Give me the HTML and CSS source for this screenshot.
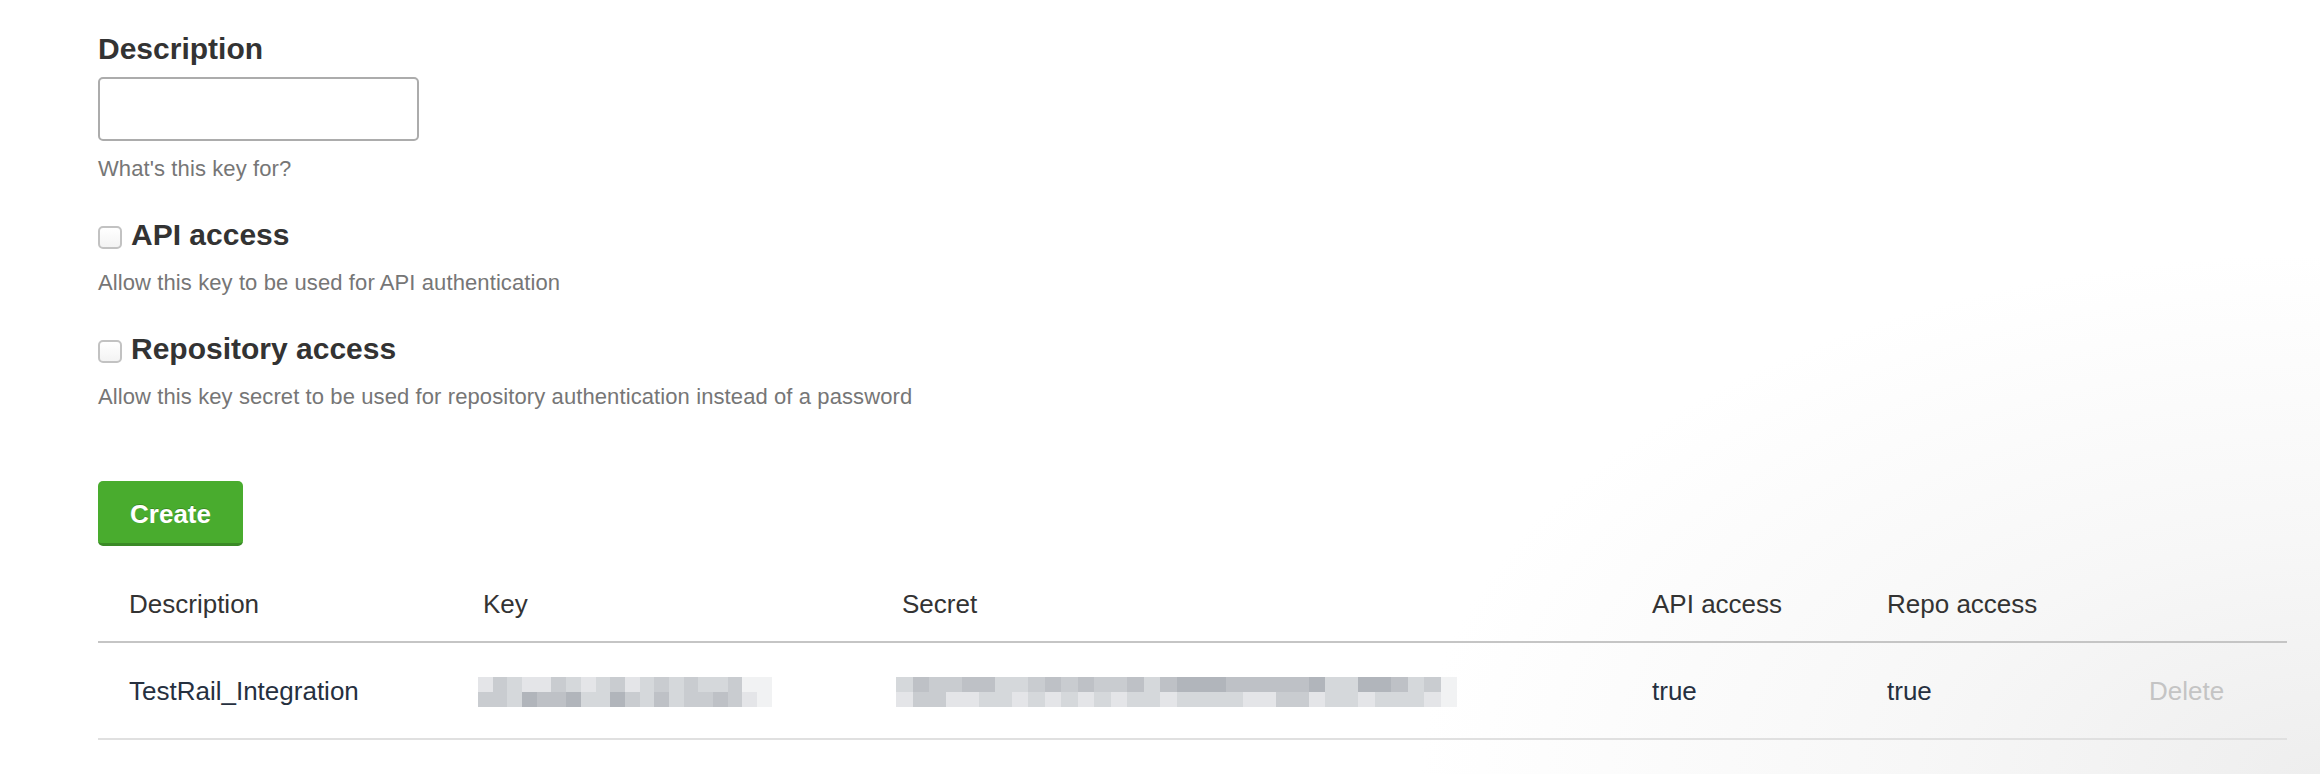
FILE: index.html
```html
<!DOCTYPE html>
<html lang="en">
<head>
<meta charset="utf-8">
<title>API keys</title>
<link rel="stylesheet" href="styles.css">
</head>
<body>
<main class="page">
  <form class="key-form">
    <label class="field-label" for="desc">Description</label>
    <input class="text-input" id="desc" type="text">
    <p class="hint">What's this key for?</p>

    <div class="check-row">
      <input class="checkbox" id="api" type="checkbox">
      <label class="check-label" for="api">API access</label>
    </div>
    <p class="hint hint-tight">Allow this key to be used for API authentication</p>

    <div class="check-row">
      <input class="checkbox" id="repo" type="checkbox">
      <label class="check-label" for="repo">Repository access</label>
    </div>
    <p class="hint hint-tight">Allow this key secret to be used for repository authentication instead of a password</p>

    <button class="btn-create" type="button">Create</button>
  </form>

  <table class="keys">
    <colgroup>
      <col class="c-desc"><col class="c-key"><col class="c-secret"><col class="c-api"><col class="c-repo"><col class="c-del">
    </colgroup>
    <thead>
      <tr>
        <th>Description</th>
        <th>Key</th>
        <th>Secret</th>
        <th>API access</th>
        <th>Repo access</th>
        <th></th>
      </tr>
    </thead>
    <tbody>
      <tr>
        <td>TestRail_Integration</td>
        <td>
          <span class="blur blur-key">
            <span class="blur-row">
              <i class="s1"></i><i class="s3"></i><i class="s2"></i><i class="s1"></i><i class="s1"></i><i class="s3"></i><i class="s2"></i><i class="s1"></i><i class="s2"></i><i class="s3"></i><i class="s1"></i><i class="s2"></i><i class="s3"></i><i class="s2"></i><i class="s3"></i><i class="s2"></i><i class="s2"></i><i class="s3"></i><i class="s0"></i><i class="s0"></i>
            </span>
            <span class="blur-row">
              <i class="s3"></i><i class="s3"></i><i class="s2"></i><i class="s5"></i><i class="s4"></i><i class="s4"></i><i class="s5"></i><i class="s2"></i><i class="s2"></i><i class="s5"></i><i class="s3"></i><i class="s2"></i><i class="s4"></i><i class="s2"></i><i class="s3"></i><i class="s3"></i><i class="s4"></i><i class="s3"></i><i class="s1"></i><i class="s0"></i>
            </span>
          </span>
        </td>
        <td>
          <span class="blur blur-secret">
            <span class="blur-row">
              <i class="s2"></i><i class="s4"></i><i class="s3"></i><i class="s3"></i><i class="s4"></i><i class="s4"></i><i class="s2"></i><i class="s2"></i><i class="s3"></i><i class="s4"></i><i class="s3"></i><i class="s4"></i><i class="s3"></i><i class="s3"></i><i class="s4"></i><i class="s2"></i><i class="s4"></i><i class="s5"></i><i class="s5"></i><i class="s5"></i><i class="s4"></i><i class="s4"></i><i class="s4"></i><i class="s4"></i><i class="s4"></i><i class="s5"></i><i class="s2"></i><i class="s2"></i><i class="s5"></i><i class="s5"></i><i class="s4"></i><i class="s2"></i><i class="s3"></i><i class="s0"></i>
            </span>
            <span class="blur-row">
              <i class="s1"></i><i class="s3"></i><i class="s3"></i><i class="s1"></i><i class="s1"></i><i class="s2"></i><i class="s2"></i><i class="s1"></i><i class="s2"></i><i class="s1"></i><i class="s2"></i><i class="s1"></i><i class="s2"></i><i class="s1"></i><i class="s2"></i><i class="s2"></i><i class="s1"></i><i class="s2"></i><i class="s2"></i><i class="s2"></i><i class="s2"></i><i class="s1"></i><i class="s1"></i><i class="s3"></i><i class="s3"></i><i class="s1"></i><i class="s2"></i><i class="s2"></i><i class="s1"></i><i class="s2"></i><i class="s2"></i><i class="s2"></i><i class="s1"></i><i class="s0"></i>
            </span>
          </span>
        </td>
        <td>true</td>
        <td>true</td>
        <td class="delete">Delete</td>
      </tr>
    </tbody>
  </table>
</main>
</body>
</html>
```

FILE: styles.css
```css
html {
  background: #ffffff;
}

body {
  margin: 0;
  min-height: 774px;
  font-family: "Liberation Sans", Arial, Helvetica, sans-serif;
  color: #333333;
  background: radial-gradient(ellipse 900px 520px at 100% 100%, #eeeeee 0%, #f7f7f7 45%, #ffffff 100%);
}

.page {
  padding: 32px 33px 20px 98px;
}

.key-form {
  display: flex;
  flex-direction: column;
  align-items: flex-start;
}

.field-label {
  display: block;
  font-size: 30px;
  font-weight: bold;
  line-height: 34px;
  color: #333333;
}

.text-input {
  display: block;
  box-sizing: border-box;
  width: 321px;
  height: 64px;
  margin-top: 11px;
  border: 2px solid #acacac;
  border-radius: 5px;
  background: #ffffff;
  font-size: 24px;
}

.hint {
  margin: 15px 0 0;
  font-size: 22px;
  line-height: 26px;
  letter-spacing: 0.1px;
  color: #767676;
}

.hint-tight {
  margin-top: 18px;
}

.check-row {
  display: flex;
  align-items: center;
  gap: 9px;
  margin-top: 36px;
  height: 34px;
}

.checkbox {
  appearance: none;
  -webkit-appearance: none;
  box-sizing: border-box;
  width: 24px;
  height: 23px;
  margin: 5px 0 0;
  border: 2px solid #c2c2c2;
  border-radius: 5px;
  background: linear-gradient(#ffffff, #f3f3f3);
}

.check-label {
  font-size: 30px;
  font-weight: bold;
  line-height: 34px;
  color: #333333;
}

.btn-create {
  margin-top: 71px;
  box-sizing: border-box;
  width: 145px;
  height: 65px;
  padding: 18px 0 14px;
  border: 0;
  border-bottom: 3px solid #3a8a26;
  border-radius: 5px;
  background: #49ac2e;
  color: #ffffff;
  font-family: "Liberation Sans", Arial, Helvetica, sans-serif;
  font-size: 26px;
  font-weight: bold;
  line-height: 30px;
  text-shadow: 0 -1px 0 rgba(0, 0, 0, 0.2);
}

.keys {
  margin-top: 21px;
  width: 2189px;
  border-collapse: collapse;
  table-layout: fixed;
  font-size: 26px;
  line-height: 30px;
}

.c-desc { width: 354px; }
.c-key { width: 419px; }
.c-secret { width: 750px; }
.c-api { width: 235px; }
.c-repo { width: 262px; }
.c-del { width: 169px; }

.keys th {
  padding: 22px 0 22px 31px;
  text-align: left;
  font-weight: normal;
  color: #333333;
  border-bottom: 2px solid #c5c5c5;
}

.keys td {
  padding: 32px 0 31px 31px;
  color: #26303f;
  border-bottom: 2px solid #e0e0e0;
  vertical-align: middle;
  white-space: nowrap;
}

.keys td.delete {
  color: #c4c4c4;
}

.blur {
  display: inline-flex;
  flex-direction: column;
  vertical-align: middle;
}

.blur-key {
  margin-left: -5px;
}

.blur-secret {
  margin-left: -6px;
}

.blur-row {
  display: flex;
}

.blur-row i {
  display: block;
  height: 15px;
}

.blur-key i {
  width: 14.7px;
}

.blur-secret i {
  width: 16.5px;
}

.s0 { background: #f1f2f3; }
.s1 { background: #e4e5e8; }
.s2 { background: #d5d8db; }
.s3 { background: #c9ccd0; }
.s4 { background: #bec1c6; }
.s5 { background: #b1b5bb; }
```
